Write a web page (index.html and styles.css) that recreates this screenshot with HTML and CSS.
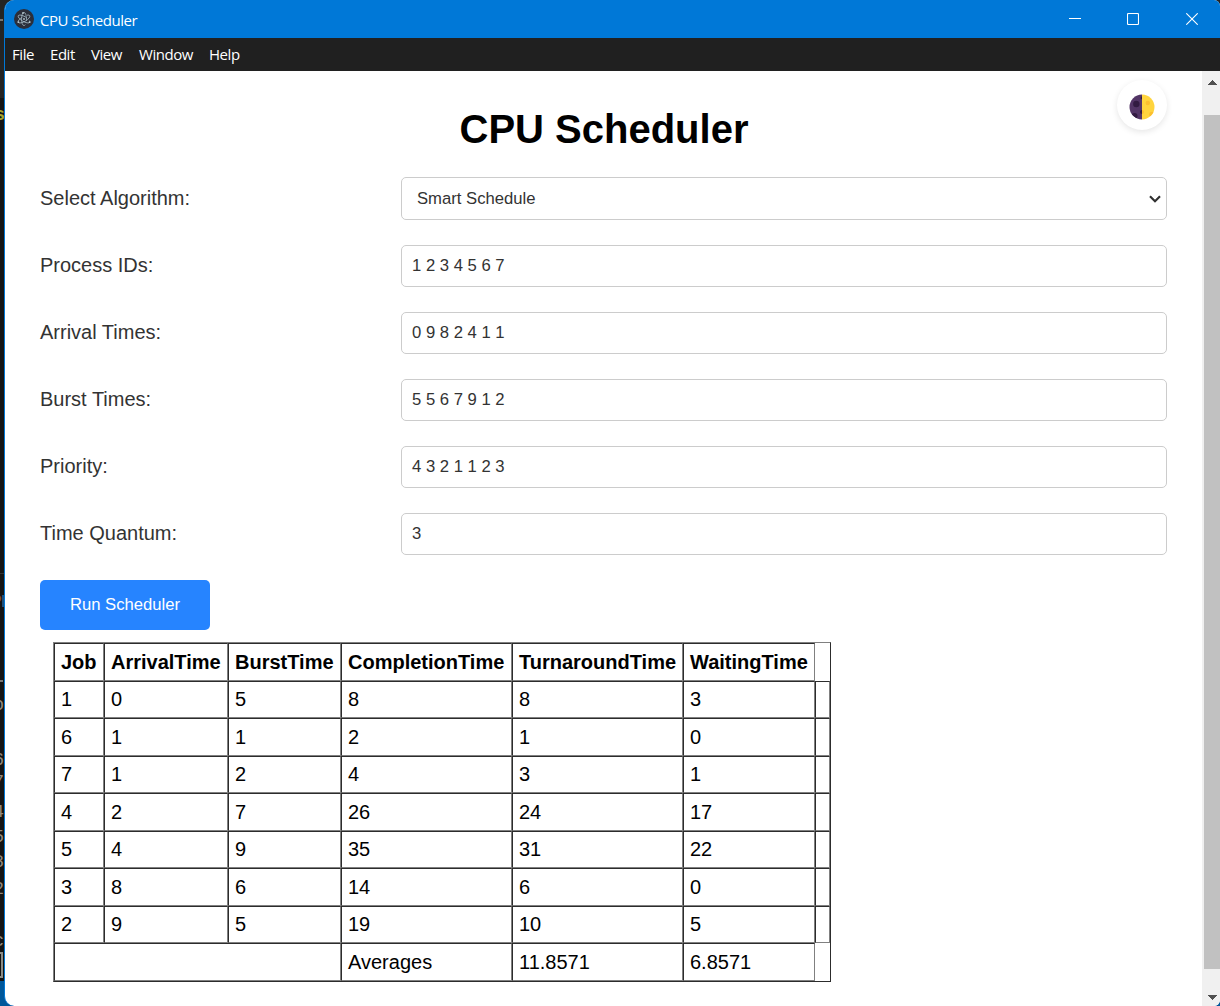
FILE: index.html
```html
<!DOCTYPE html>
<html lang="en">
<head>
<meta charset="utf-8">
<title>CPU Scheduler</title>
<link rel="stylesheet" href="styles.css">
</head>
<body>
<div class="desktop">
  <div class="behind" aria-hidden="true">
    <i class="frag dot" style="top:19px"></i>
    <span class="frag green" style="top:62px">)</span>
    <span class="frag yellow" style="top:104px">s</span>
    <i class="frag rule" style="top:573px"></i>
    <span class="frag orange" style="top:591px">P</span>
    <i class="frag bar" style="top:595px"></i>
    <i class="frag dot" style="top:680px"></i>
    <span class="frag" style="top:694px">o</span>
    <span class="frag" style="top:749px">6</span>
    <span class="frag" style="top:771px">7</span>
    <span class="frag" style="top:801px">4</span>
    <span class="frag" style="top:826px">5</span>
    <span class="frag" style="top:851px">8</span>
    <span class="frag" style="top:878px">2</span>
    <span class="frag" style="top:930px">c</span>
    <i class="frag cursor" style="top:952px"></i>
  </div>
  <div class="window">
    <header class="titlebar">
      <svg class="app-icon" viewBox="0 0 20 20">
        <circle cx="10" cy="10" r="10" fill="#2b2e3a"/>
        <g fill="none" stroke="#9fb3bd" stroke-width=".8">
          <ellipse cx="10" cy="10" rx="6.6" ry="2.5" transform="rotate(30 10 10)" stroke-dasharray="24 4"/>
          <ellipse cx="10" cy="10" rx="6.6" ry="2.5" transform="rotate(-30 10 10)" stroke-dasharray="22 5"/>
          <ellipse cx="10" cy="10" rx="6.6" ry="2.5" transform="rotate(90 10 10)" stroke-dasharray="24 4"/>
        </g>
        <g fill="#b4c6ce"><circle cx="10" cy="10" r=".9"/><circle cx="4.4" cy="13.2" r=".9"/><circle cx="15.6" cy="13.2" r=".9"/><circle cx="9" cy="4" r=".9"/></g>
      </svg>
      <span class="app-title">CPU Scheduler</span>
      <div class="controls">
        <svg class="minimize" viewBox="0 0 12 12"><path d="M0 5.5H12"/></svg>
        <svg viewBox="0 0 12 12"><rect x=".5" y=".5" width="11" height="11" rx="1"/></svg>
        <svg viewBox="0 0 12 12"><path d="M.3.3 11.7 11.7M11.7.3.3 11.7"/></svg>
      </div>
    </header>
    <nav class="menubar">
      <span class="m-file">File</span><span class="m-edit">Edit</span><span class="m-view">View</span><span class="m-window">Window</span><span class="m-help">Help</span>
    </nav>
    <div class="viewport">
      <main class="page">
        <button class="theme" aria-label="Toggle theme">
          <svg viewBox="0 0 26 26">
            <defs><clipPath id="disc"><circle cx="13" cy="13" r="12.5"/></clipPath></defs>
            <g clip-path="url(#disc)">
              <rect width="13" height="26" fill="#533566"/>
              <rect x="13" width="13" height="26" fill="#ffd43d"/>
              <g fill="#321b41"><circle cx="7.3" cy="10" r="3.2"/><circle cx="5.5" cy="22" r="3"/><path d="M13 2.5a1.4 1.4 0 0 0 0 2.8zM13 16a2 2 0 0 0 0 4z"/></g>
              <g fill="#fcbf2f"><circle cx="18.8" cy="9" r="2.2"/><circle cx="23" cy="20.5" r="2.8"/><path d="M13 16a2 2 0 0 1 0 4z"/></g>
            </g>
          </svg>
        </button>
        <h1>CPU Scheduler</h1>
        <form class="form">
          <label>Select Algorithm:</label>
          <div class="field select"><span>Smart Schedule</span><svg viewBox="0 0 12 8"><path d="M1 1.2 6 6.2 11 1.2"/></svg></div>
          <label>Process IDs:</label><div class="field">1 2 3 4 5 6 7</div>
          <label>Arrival Times:</label><div class="field">0 9 8 2 4 1 1</div>
          <label>Burst Times:</label><div class="field">5 5 6 7 9 1 2</div>
          <label>Priority:</label><div class="field">4 3 2 1 1 2 3</div>
          <label>Time Quantum:</label><div class="field">3</div>
        </form>
        <button class="run">Run Scheduler</button>
        <table class="results">
          <colgroup><col class="c-job"><col class="c-arrival"><col class="c-burst"><col class="c-wide"><col class="c-wide"><col class="c-wait"><col class="c-end"></colgroup>
          <tr class="tall"><th>Job</th><th>ArrivalTime</th><th>BurstTime</th><th>CompletionTime</th><th>TurnaroundTime</th><th>WaitingTime</th></tr>
          <tr><td>1</td><td>0</td><td>5</td><td>8</td><td>8</td><td>3</td><td></td></tr>
          <tr class="tall"><td>6</td><td>1</td><td>1</td><td>2</td><td>1</td><td>0</td><td></td></tr>
          <tr><td>7</td><td>1</td><td>2</td><td>4</td><td>3</td><td>1</td><td></td></tr>
          <tr class="tall"><td>4</td><td>2</td><td>7</td><td>26</td><td>24</td><td>17</td><td></td></tr>
          <tr><td>5</td><td>4</td><td>9</td><td>35</td><td>31</td><td>22</td><td></td></tr>
          <tr class="tall"><td>3</td><td>8</td><td>6</td><td>14</td><td>6</td><td>0</td><td></td></tr>
          <tr><td>2</td><td>9</td><td>5</td><td>19</td><td>10</td><td>5</td><td></td></tr>
          <tr class="tall"><td colspan="3"></td><td>Averages</td><td>11.8571</td><td>6.8571</td></tr>
        </table>
      </main>
      <div class="scrollbar">
        <svg class="up" viewBox="0 0 9 5" shape-rendering="crispEdges"><path d="M0 5 4.5 0 9 5z"/></svg>
        <div class="thumb"></div>
        <svg class="down" viewBox="0 0 9 5" shape-rendering="crispEdges"><path d="M0 0 4.5 5 9 0z"/></svg>
      </div>
    </div>
  </div>
</div>
</body>
</html>
```
FILE: styles.css
```css
* { box-sizing: border-box; }
body { margin: 0; font-family: "Liberation Sans", Arial, sans-serif; }
.desktop {
  position: relative;
  width: 1220px; height: 1006px;
  padding-left: 4px;
  overflow: hidden;
  background: linear-gradient(#242424 98px, #141414 98px 981px, #00579a 981px);
}

/* sliver of the terminal window showing past the left edge */
.behind { position: absolute; left: 0; top: 0; width: 4px; height: 1006px; overflow: hidden; }
.frag { position: absolute; right: 0; font: 18px/22px "Liberation Mono", monospace; color: #93897c; }
.green { color: #285b48; right: 2px; }
.yellow { color: #a5a32c; font-weight: bold; right: -1px; }
.orange { color: #80512f; right: 2px; }
.dot { width: 3px; height: 2px; right: 1px; background: #777; }
.rule { width: 4px; height: 1px; background: #333; }
.bar { width: 2px; height: 12px; background: #1c4f7c; }
.cursor { width: 12px; height: 26px; right: 1px; border: 2px solid #8d8d86; }

.window {
  display: flex; flex-direction: column;
  width: 1216px; height: 1006px;
  border-left: 1px solid #0078d7;
  border-radius: 10px 6px 6px 10px;
  overflow: hidden;
  background: #fff;
}
.titlebar {
  display: flex; align-items: center;
  flex: none; height: 38px; padding-left: 9px; margin-left: -1px;
  background: #0078d7; color: #fff;
  font: 15px/20px "Open Sans", sans-serif;
}
.app-icon { width: 20px; height: 20px; margin-left: 1px; }
.app-title { margin: 1px 0 0 6px; width: 100px; letter-spacing: -.45px; white-space: nowrap; }
.controls { display: flex; gap: 47px; margin-left: auto; padding-right: 22px; }
.controls svg { display: block; width: 12px; height: 12px; fill: none; stroke: #fff; stroke-width: 1.1; }
.controls .minimize { margin-right: -1px; }
.menubar {
  display: flex; align-items: center;
  flex: none; height: 33px; padding: 0 0 2px 7px;
  background: #202020; color: #fff;
  font: 15px/20px "Open Sans", sans-serif;
  letter-spacing: -.45px; white-space: nowrap;
}
.m-file { width: 38px; }
.m-edit { width: 41px; }
.m-view { width: 48px; }
.m-window { width: 70px; }
.viewport { display: flex; flex: 1; min-height: 0; }

.page { position: relative; width: 1197px; padding: 34px 35px 0; }
h1 { margin: 0 0 24px; height: 48px; font-size: 40px; line-height: 48px; text-align: center; color: #000; padding-left: 1px; }
.theme {
  position: absolute; right: 35px; top: 9px;
  width: 50px; height: 50px; padding: 4px 0 0 0;
  display: flex; align-items: center; justify-content: center;
  border: 0; border-radius: 50%; background: #fff;
  box-shadow: 0 2px 6px rgba(0, 0, 0, .1);
}
.theme svg { width: 26px; height: 26px; }
.form {
  display: grid; grid-template-columns: 361px 766px;
  grid-template-rows: 43px repeat(5, 42px); row-gap: 25px;
  align-items: center;
  font-size: 20px; line-height: 24px; color: #333;
}
.form label { padding-bottom: 2px; }
.field {
  display: flex; align-items: center;
  height: 100%; padding: 0 10px;
  border: 1px solid #ccc; border-radius: 5px;
  font-size: 16.667px; line-height: 20px; color: #333;
}
.select { justify-content: space-between; padding: 0 5px 0 15px; }
.select svg { width: 12px; height: 8px; fill: none; stroke: #333; stroke-width: 2.2; }
.run {
  display: block; width: 170px; height: 50px; margin: 25px 0 12px; padding: 0;
  border: 0; border-radius: 5px; background: #2684ff; color: #fff;
  font: 16.667px/20px "Liberation Sans", Arial, sans-serif;
}

.results {
  width: 778px; margin-left: 13px;
  table-layout: fixed; border-spacing: 0;
  border: 1px solid; border-color: #808080 #2c2c2c #2c2c2c #808080;
  font-size: 20px; line-height: 24px; color: #000;
}
.results tr { height: 37px; }
.results .tall { height: 38px; }
.results th, .results td {
  padding: 0 0 1px 6px; text-align: left;
  border: 1px solid; border-color: #2c2c2c #808080 #808080 #2c2c2c;
}
.c-job { width: 50px; }
.c-arrival { width: 124px; }
.c-burst { width: 113px; }
.c-wide { width: 171px; }
.c-wait { width: 132px; }
.c-end { width: 15px; }

.scrollbar {
  display: flex; flex-direction: column; align-items: center;
  width: 18px; padding: 9px 0 6px 2px; background: #f0f0f0;
}
.scrollbar svg { width: 9px; height: 5px; fill: #505050; flex: none; margin-left: 1px; }
.thumb { width: 100%; height: 854px; margin-top: 30px; background: #c1c1c1; }
.down { margin-top: auto; }
```
